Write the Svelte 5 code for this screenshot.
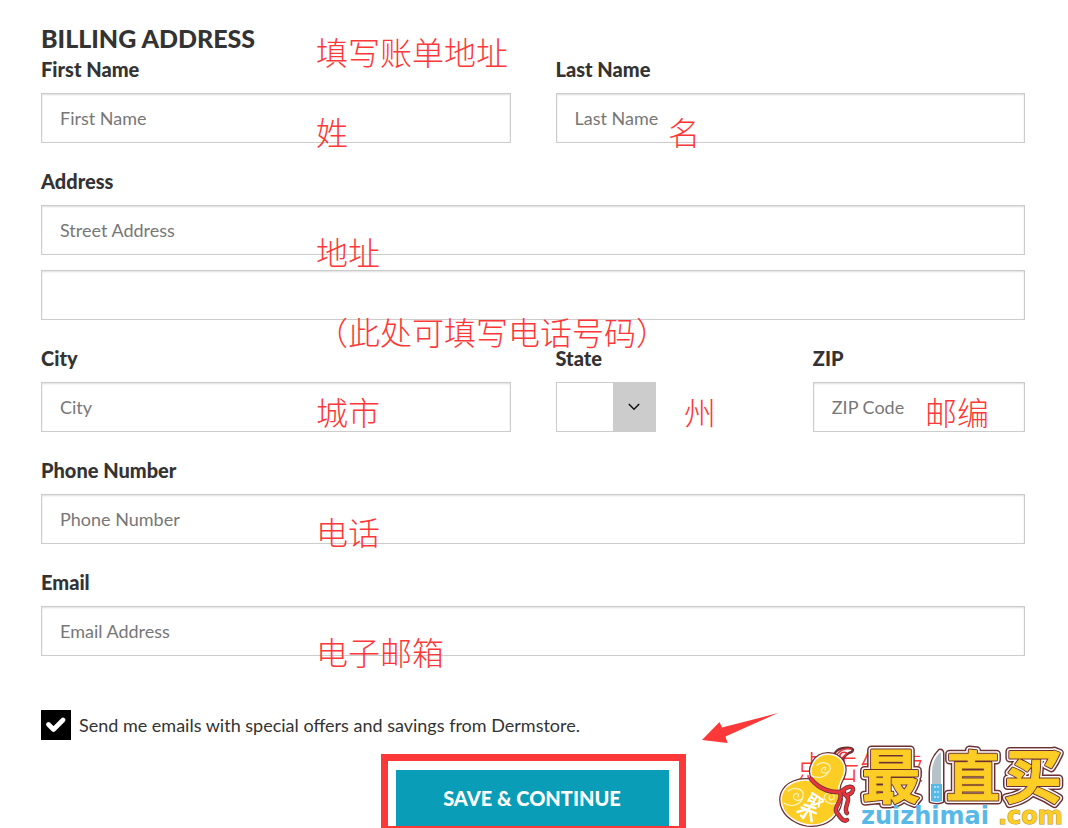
<script>
  let form = $state({
    firstName: '',
    lastName: '',
    street: '',
    street2: '',
    city: '',
    region: '',
    zip: '',
    phone: '',
    email: '',
    offers: true
  });

  const regions = ['', 'CA', 'DE', 'NY', 'OR'];

  // hints laid over the form
  const notes = [
    { text: '填写账单地址', x: 316, y: 31 },
    { text: '姓', x: 316, y: 111 },
    { text: '名', x: 668, y: 111 },
    { text: '地址', x: 316, y: 231 },
    { text: '（此处可填写电话号码）', x: 316, y: 311 },
    { text: '城市', x: 316, y: 391 },
    { text: '州', x: 684, y: 391 },
    { text: '邮编', x: 925, y: 391 },
    { text: '电话', x: 316, y: 511 },
    { text: '电子邮箱', x: 316, y: 631 },
    { text: '点击继续', x: 796, y: 745 }
  ];
</script>

<main class="page">
  <form onsubmit={(e) => e.preventDefault()}>
    <h1>BILLING ADDRESS</h1>

    <div class="row">
      <div class="field">
        <label for="first">First Name</label>
        <input id="first" type="text" placeholder="First Name" bind:value={form.firstName} />
      </div>
      <div class="field">
        <label for="last">Last Name</label>
        <input id="last" type="text" placeholder="Last Name" bind:value={form.lastName} />
      </div>
    </div>

    <div class="field">
      <label for="street">Address</label>
      <input id="street" type="text" placeholder="Street Address" bind:value={form.street} />
      <input class="second" type="text" aria-label="Address line 2" bind:value={form.street2} />
    </div>

    <div class="row">
      <div class="field">
        <label for="city">City</label>
        <input id="city" type="text" placeholder="City" bind:value={form.city} />
      </div>
      <div class="row">
        <div class="field">
          <label for="region">State</label>
          <div class="select">
            <select id="region" bind:value={form.region}>
              {#each regions as r}
                <option value={r}>{r}</option>
              {/each}
            </select>
            <svg width="12" height="8" viewBox="0 0 12 8" aria-hidden="true">
              <path d="M0.8 1L6 6.2L11.2 1" fill="none" stroke="#111" stroke-width="1.5" />
            </svg>
          </div>
        </div>
        <div class="field">
          <label for="zip">ZIP</label>
          <input id="zip" type="text" placeholder="ZIP Code" bind:value={form.zip} />
        </div>
      </div>
    </div>

    <div class="field">
      <label for="phone">Phone Number</label>
      <input id="phone" type="tel" placeholder="Phone Number" bind:value={form.phone} />
    </div>

    <div class="field">
      <label for="email">Email</label>
      <input id="email" type="email" placeholder="Email Address" bind:value={form.email} />
    </div>

    <label class="offers">
      <span class="tick">
        <input type="checkbox" bind:checked={form.offers} />
        {#if form.offers}
          <svg width="20" height="16" viewBox="0 0 20 16" aria-hidden="true">
            <path d="M2.5 7.5L7.5 12.5L17 3" fill="none" stroke="#fff" stroke-width="4.6" stroke-linecap="round" stroke-linejoin="round" />
          </svg>
        {/if}
      </span>
      <span>Send me emails with special offers and savings from Dermstore.</span>
    </label>

    <div class="frame">
      <button type="submit">SAVE &amp; CONTINUE</button>
    </div>
  </form>

  {#each notes as note}
    <span class="note" style="left: {note.x}px; top: {note.y}px">{note.text}</span>
  {/each}

  <svg class="arrow" width="76" height="32" viewBox="0 0 76 32" aria-hidden="true">
    <path d="M0 28L17.5 10L20 15.5L76 1L23.5 24.5L25.5 31Z" fill="#fd3838" />
  </svg>

  <svg class="logo" width="290" height="86" viewBox="0 0 290 86" role="img" aria-label="zuizhimai.com">
    <defs>
      <g id="word" class="word">
        <text x="84" y="56">最</text>
        <text class="narrow" x="168" y="55">直</text>
        <text x="226" y="56">买</text>
      </g>
      <path id="blade" d="M153 59V30C153 21 158 13 162 9Q164 9 164 12V59Q159 61 153 59Z" />
      <path id="gourd" d="M36 39C28 27 37 12 50 12C63 12 70 24 65 35C63 40 60 43 61 48C64 56 63 65 57 72C48 84 31 86 18 79C6 73 1 62 4 52C8 41 21 36 36 39Z" />
      <path id="ribbon" d="M33 37C42 48 55 52 66 49M65 48C76 39 79 51 69 53M62 51C66 59 53 66 60 72C63 77 66 80 69 78M66 52C76 57 64 65 69 71" />
    </defs>

    <g stroke-linejoin="round" stroke-linecap="round" fill="none">
      <!-- stem -->
      <path d="M59 17C52 11 61 5 72 6C77 7 75 10 71 11C67 13 66 15 63 19" fill="#fff" stroke="#6b3034" stroke-width="2.5" />
      <path d="M58 15C60 9 66 6 73 7M62 16C61 11 65 9 69 11C67 14 65 15 63 17" stroke="#e8323c" stroke-width="1.5" />
      <!-- body -->
      <use href="#gourd" stroke="#6b3034" stroke-width="4" />
      <use href="#gourd" fill="#fbcd25" stroke="#fff" stroke-width="1.5" />
      <path d="M39 23C45 18 54 22 52 28C49 33 41 31 44 27C46 24 49 26 47 28M34 34C41 37 48 35 51 29" stroke="#fff3bd" stroke-width="1.2" />
      <path d="M10 49C17 44 27 47 25 55C22 61 13 58 16 53C18 50 22 52 20 55M6 61C13 66 23 63 25 55M46 56C47 48 58 50 56 56C54 60 49 57 52 54M46 56C48 61 54 63 58 61" stroke="#fff3bd" stroke-width="1.2" />
      <!-- ribbon -->
      <use href="#ribbon" stroke="#6b3034" stroke-width="4.5" />
      <use href="#ribbon" stroke="#e8323c" stroke-width="3" />
      <!-- brush mark -->
      <g transform="rotate(33 34 64)" stroke="#fff">
        <path d="M27 53H40M28 53V62M33 53V62M28 57H33M28 61L34 60M37 55L40 61M41 54L35 62" stroke-width="2" />
        <path d="M38 64L27 67M41 68L26 71M33 63V79L30 78M31 70L25 77M36 70L42 77" stroke-width="2.5" />
      </g>
    </g>

    <!-- lettering outlines, widest first -->
    <g stroke-linejoin="round">
      <use href="#blade" stroke="#6b3034" stroke-width="5" />
      <use href="#word" fill="#6b3034" stroke="#6b3034" stroke-width="9" />
      <use href="#word" fill="#fff" stroke="#fff" stroke-width="6" />
      <use href="#word" fill="#6b3034" stroke="#6b3034" stroke-width="3" />
      <use href="#word" fill="#fbcd25" stroke="#fbcd25" stroke-width="1" />
      <use href="#blade" fill="#b7c1c8" stroke="#fff" stroke-width="2" />
      <path d="M153 42H164V59Q159 61 153 59Z" fill="#58b9e8" />
      <path d="M157 44V56M160 44V56" stroke="#fff" stroke-width="1" stroke-dasharray="2 3" />
    </g>

    <text class="url blue" x="83" y="82">zuizhimai</text>
    <text class="url gold" x="220" y="82">.com</text>
  </svg>
</main>

<style>
  :global(body) {
    margin: 0;
    background: #fff;
  }
  .page {
    position: relative;
    overflow: hidden;
    max-height: 100vh;
    font-family: Lato, 'Noto Sans CJK SC', sans-serif;
    font-size: 18px;
    color: #333;
  }
  form {
    padding: 22px 43px 0 41px;
  }
  h1 {
    margin: 0;
    font-size: 25px;
    line-height: 32px;
    font-weight: 900;
  }
  .row {
    display: grid;
    grid-template-columns: 1fr 1fr;
    column-gap: 45px;
  }
  .field {
    display: flex;
    flex-direction: column;
    min-width: 0;
    margin-bottom: 23px;
  }
  .row .row .field {
    margin-bottom: 0;
  }
  .field label {
    margin-bottom: 9px;
    font-size: 20px;
    line-height: 30px;
    font-weight: 900;
  }
  .field input {
    box-sizing: border-box;
    width: 100%;
    height: 50px;
    padding: 0 18px;
    border: 1px solid #ccc;
    border-radius: 0;
    box-shadow: inset 0 1px 2px #ddd;
    background: #fff;
    font: inherit;
    color: #333;
  }
  .field input::placeholder {
    color: #777;
    opacity: 1;
  }
  .field .second {
    margin-top: 15px;
  }
  .select {
    display: grid;
    grid-template-columns: 57px 43px;
    width: 100px;
    align-items: center;
  }
  select {
    grid-area: 1 / 1 / 2 / 3;
    appearance: none;
    box-sizing: border-box;
    width: 100%;
    height: 50px;
    padding: 0 12px;
    border: 1px solid #ccc;
    border-radius: 0;
    background: linear-gradient(#ccc, #ccc) right / 42px 100% no-repeat #fff;
    font: inherit;
    color: #333;
  }
  .select svg {
    grid-area: 1 / 2;
    justify-self: center;
    pointer-events: none;
  }
  .offers {
    display: flex;
    align-items: center;
    gap: 8px;
    margin-top: 54px;
    line-height: 30px;
  }
  .tick {
    display: grid;
    place-items: center;
    width: 30px;
    height: 30px;
  }
  .tick input {
    grid-area: 1 / 1;
    appearance: none;
    width: 30px;
    height: 30px;
    margin: 0;
    background: #000;
  }
  .tick svg {
    grid-area: 1 / 1;
    pointer-events: none;
  }
  .frame {
    box-sizing: border-box;
    width: 305px;
    margin: 14px auto 0;
    padding: 9px 10px 0 8px;
    border: 7px solid #fd3838;
  }
  button {
    display: block;
    width: 100%;
    height: 56px;
    padding: 0;
    border: 0;
    background: #099db7;
    font: inherit;
    font-size: 20px;
    font-weight: 900;
    color: #fff;
  }
  .note {
    position: absolute;
    font-family: 'Noto Sans CJK SC', sans-serif;
    font-size: 32px;
    font-weight: 300;
    line-height: 40px;
    white-space: nowrap;
    color: #fd3838;
    pointer-events: none;
  }
  .arrow {
    position: absolute;
    left: 702px;
    top: 712px;
  }
  .logo {
    position: absolute;
    right: 0;
    bottom: 0;
  }
  .word {
    font-family: 'Noto Sans CJK SC', sans-serif;
    font-size: 58px;
    font-weight: 700;
  }
  .narrow {
    font-size: 54px;
  }
  .url {
    font-family: 'DejaVu Sans', sans-serif;
    font-size: 24px;
    font-weight: 700;
  }
  .blue {
    fill: #58b9e8;
  }
  .gold {
    fill: #fbcd25;
    stroke: #b98a3a;
    stroke-width: 1px;
    paint-order: stroke;
  }
</style>
